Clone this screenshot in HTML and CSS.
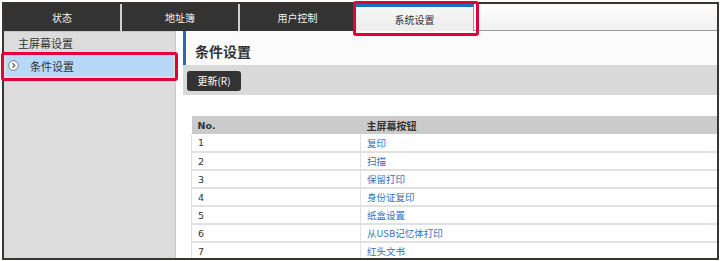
FILE: index.html
```html
<!doctype html>
<html lang="zh-CN">
<head>
    <meta charset="UTF-8">
    <title>系统设置</title>
    <link rel="stylesheet" href="styles.css">
</head>
<body>
<div class="frame">
    <div class="tabbar">
        <div class="tab t1">状态</div>
        <div class="tab t2">地址簿</div>
        <div class="tab t3">用户控制</div>
        <div class="tab active">系统设置</div>
        <div class="tab-rest"></div>
    </div>
    <div class="body">
        <ul class="side">
            <li class="side-title">主屏幕设置</li>
            <li class="side-item on">
                <svg class="arrow" width="11" height="11" viewBox="0 0 11 11">
                    <circle cx="5.5" cy="5.5" r="4.8" fill="#fff" stroke="#777" stroke-width="1"/>
                    <path d="M4.5 3.2 L6.8 5.5 L4.5 7.8" fill="none" stroke="#666" stroke-width="1.3"/>
                </svg>
                <span>条件设置</span>
            </li>
        </ul>
        <div class="main">
            <h2 class="title">条件设置</h2>
            <div class="toolbar">
                <button class="btn">更新(R)</button>
            </div>
            <table class="list">
                <tr><th class="c1">No.</th><th>主屏幕按钮</th></tr>
                <tr><td class="c1">1</td><td><a>复印</a></td></tr>
                <tr><td class="c1">2</td><td><a>扫描</a></td></tr>
                <tr><td class="c1">3</td><td><a>保留打印</a></td></tr>
                <tr><td class="c1">4</td><td><a>身份证复印</a></td></tr>
                <tr><td class="c1">5</td><td><a>纸盒设置</a></td></tr>
                <tr><td class="c1">6</td><td><a>从USB记忆体打印</a></td></tr>
                <tr><td class="c1">7</td><td><a>红头文书</a></td></tr>
            </table>
        </div>
    </div>
    <!-- annotation boxes -->
    <div class="mark mark-tab"></div>
    <div class="mark mark-side"></div>
</div>
</body>
</html>
```

FILE: styles.css
```css
*{
    box-sizing: border-box;
}
html,body{
    margin:0;
    padding:0;
    background:#fff;
    overflow:hidden;
}
body{
    font-family: "DejaVu Sans", "Noto Sans CJK SC", sans-serif;
    color:#333;
}

.frame{
    position: relative;
    margin:2px 0 0 2px;
    width:717px;
    height:258px;
    border:2px solid #3a3433;
}

/* tabs */
.tabbar{
    display: flex;
    height:27px;
    background:#f6f6f6;
}
.tab{
    display: flex;
    align-items: center;
    justify-content: center;
    height:27px;
    font-family: "Noto Sans CJK SC", sans-serif;
    font-size:10px;
    color:#f2f2f2;
    background:#333;
}
.t1{ width:118px; border-right:2px solid #d0d0d0; }
.t2{ width:118px; border-right:2px solid #d0d0d0; }
.t3{ width:115px; }
.tab.active{
    width:119px;
    color:#333;
    background: linear-gradient(#f7f7f7, #ececec);
    border-top:3px solid #1d6fc0;
    border-left:1px solid #999;
    border-right:1px solid #999;
    padding-top:1px;
}
.tab-rest{
    flex:1;
    background: linear-gradient(#fff, #f0f0f0);
    border-bottom:1px solid #9a9a9a;
}

.body{
    display: flex;
    height:227px;
}

/* side menu */
.side{
    width:172px;
    margin:0;
    padding:0;
    list-style: none;
    background:#dcdcdc;
    border-right:1px solid #c8c8c8;
    font-family: "Noto Sans CJK SC", sans-serif;
    font-size:11px;
}
.side-title{
    height:22px;
    line-height:22px;
    padding-left:14px;
    border-top:1px solid #c8c8c8;
}
.side-item{
    display: flex;
    align-items: center;
    height:21px;
    margin:2px 2px 0 2px;
    padding-left:2px;
}
.side-item.on{
    background:#b8d8f8;
}
.side-item .arrow{
    margin-right:11px;
}

/* main */
.main{
    flex:1;
    margin-left:7px;
    overflow: hidden;
}
.title{
    margin:0;
    height:34px;
    line-height:34px;
    padding:3px 0 0 9px;
    border-left:3px solid #1d6fc0;
    background:#fbfbfb;
    font-family: "Noto Sans CJK SC", sans-serif;
    font-size:14px;
    font-weight:bold;
    color:#333;
}
.toolbar{
    height:30px;
    padding:5px 0 0 4px;
    background:#d9d9d9;
}
.btn{
    width:54px;
    height:20px;
    padding:0;
    border:none;
    border-radius:3px;
    background:#333;
    color:#fff;
    font-family: "Noto Sans CJK SC", sans-serif;
    font-size:10px;
}

.list{
    margin:21px 0 0 8px;
    width:560px;
    border-collapse: collapse;
    font-size:9.5px;
}
.list th{
    height:18px;
    padding:0 6px;
    text-align: left;
    background:#cbcbcb;
    font-family: "Noto Sans CJK SC", sans-serif;
    font-weight:bold;
    font-size:10px;
}
.list th.c1{
    font-family: "DejaVu Sans", sans-serif;
    font-size:9.5px;
}
.list td{
    height:18px;
    padding:0 6px;
    border-bottom:2px solid #e1e1e1;
    border-left:1px solid #e1e1e1;
    font-family: "Noto Sans CJK SC", sans-serif;
}
.list td.c1{
    width:169px;
    font-family: "DejaVu Sans", sans-serif;
}
.list a{
    color:#2f72c4;
}

/* red highlight */
.mark{
    position: absolute;
    border:3px solid #e2003b;
    border-radius:3px;
}
.mark-tab{
    left:349px;
    top:-3px;
    width:126px;
    height:35px;
}
.mark-side{
    left:-3px;
    top:48px;
    width:177px;
    height:29px;
}
```
